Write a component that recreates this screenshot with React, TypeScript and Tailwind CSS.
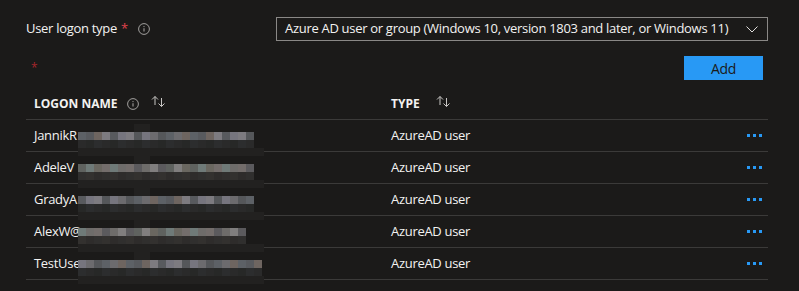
import React from "react";

const rows = [
  { name: "JannikR", end: 250, type: "AzureAD user" },
  { name: "AdeleV", end: 250, type: "AzureAD user" },
  { name: "GradyA", end: 250, type: "AzureAD user" },
  { name: "AlexW@", end: 242, type: "AzureAD user" },
  { name: "TestUse", end: 258, type: "AzureAD user" },
];

const bright = [
  "#5d6166", "#6e6c6a", "#7d7b80", "#5f625f", "#6c6b6e", "#736d6b", "#585a5e",
  "#807e7e", "#55575a", "#6f7a78", "#6e6560", "#5b5a5d", "#76757e", "#6a6760",
];
const dark = ["#2a2a2a", "#302f2e", "#272827", "#33312f", "#2c2d2e", "#2e2c2b"];

const InfoIcon = () => (
  <svg width="12" height="12" viewBox="0 0 12 12" fill="none">
    <circle cx="6" cy="6" r="5.4" stroke="#a19f9d" strokeWidth="1" />
    <path d="M6 5.2v3.4" stroke="#a19f9d" strokeWidth="1.1" />
    <circle cx="6" cy="3.6" r="0.65" fill="#a19f9d" />
  </svg>
);

const SortIcon = () => (
  <svg width="15" height="13" viewBox="0 0 15 13" fill="none">
    <path d="M4 10V1.5M1 4.5l3-3 3 3" stroke="#c8c6c4" strokeWidth="1" />
    <path d="M10.5 3v8.5M7.5 8.5l3 3 3-3" stroke="#c8c6c4" strokeWidth="1" />
  </svg>
);

// pixelated redaction block over the name cell
const Mosaic = ({ row, end }: { row: number; end: number }) => {
  const count = Math.round((end - 78) / 8);
  return (
    <div className="pointer-events-none absolute left-[52px] top-[4px] flex flex-col">
      <div className="flex h-[8px] pl-[56px]">
        {[0, 1].map((i) => (
          <div key={i} className="h-[8px] w-[8px] bg-[#222120]" />
        ))}
      </div>
      <div className="flex h-[8px]">
        {Array.from({ length: count }).map((_, i) => (
          <div
            key={i}
            className="h-[8px] w-[8px]"
            style={{ background: bright[(i * 5 + row * 3 + ((i * i) % 4)) % bright.length] }}
          />
        ))}
      </div>
      <div className="flex h-[8px]">
        {Array.from({ length: count }).map((_, i) => (
          <div
            key={i}
            className="h-[8px] w-[8px]"
            style={{ background: dark[(i * 2 + row) % dark.length] }}
          />
        ))}
      </div>
      <div className="h-[8px] w-[186px] bg-[#222120]" />
    </div>
  );
};

export default function App() {
  return (
    <div className="min-h-[291px] w-[799px] bg-[#1b1a19] pl-[26px] pt-[17px] font-['Segoe_UI','Open_Sans',sans-serif] text-[13px] tracking-[-0.3px] text-[#f3f2f1]">
      <div className="flex w-[742px] items-center">
        <div className="flex items-center">
          <span>User logon type</span>
          <span className="ml-[4px] text-[#e0424c]">*</span>
          <span className="ml-[10px] flex">
            <InfoIcon />
          </span>
        </div>
        <div className="ml-auto flex h-[24px] w-[492px] items-center border border-[#8a8886] pl-[8px] pr-[9px]">
          <span className="whitespace-nowrap">
            Azure AD user or group (Windows 10, version 1803 and later, or Windows 11)
          </span>
          <svg className="ml-auto" width="12" height="7" viewBox="0 0 12 7" fill="none">
            <path d="M0.5 0.5l5.5 5.5 5.5-5.5" stroke="#e1dfdd" strokeWidth="1" />
          </svg>
        </div>
      </div>

      <div className="mt-[15px] flex w-[742px] items-start">
        <span className="ml-[5px] mt-[6px] text-[12px] leading-[12px] text-[#a4262c]">*</span>
        <button className="ml-auto mr-[5px] h-[24px] w-[79px] bg-[#2899f5] text-[14px] text-[#1b1a19]">
          Add
        </button>
      </div>

      <div className="mt-[8px] w-[742px]">
        <div className="flex h-[32px] items-center border-b border-[#3b3a39] pl-[8px]">
          <div className="flex w-[357px] items-center">
            <span className="text-[12px] font-bold tracking-normal">LOGON NAME</span>
            <span className="ml-[9px] flex">
              <InfoIcon />
            </span>
            <span className="ml-[12px] mb-[4px] flex">
              <SortIcon />
            </span>
          </div>
          <div className="flex items-center">
            <span className="text-[12px] font-bold tracking-normal">TYPE</span>
            <span className="ml-[16px] mb-[4px] flex">
              <SortIcon />
            </span>
          </div>
        </div>
        {rows.map((r, idx) => (
          <div
            key={r.name}
            className="relative flex h-[32px] items-center border-b border-[#3b3a39] pl-[8px]"
          >
            <div className="w-[357px] whitespace-nowrap">{r.name}</div>
            <div>{r.type}</div>
            <div className="ml-auto mr-[6px] flex gap-[3px]">
              <span className="h-[3px] w-[3px] bg-[#2899f5]" />
              <span className="h-[3px] w-[3px] bg-[#2899f5]" />
              <span className="h-[3px] w-[3px] bg-[#2899f5]" />
            </div>
            <Mosaic row={idx} end={r.end} />
          </div>
        ))}
      </div>
    </div>
  );
}
